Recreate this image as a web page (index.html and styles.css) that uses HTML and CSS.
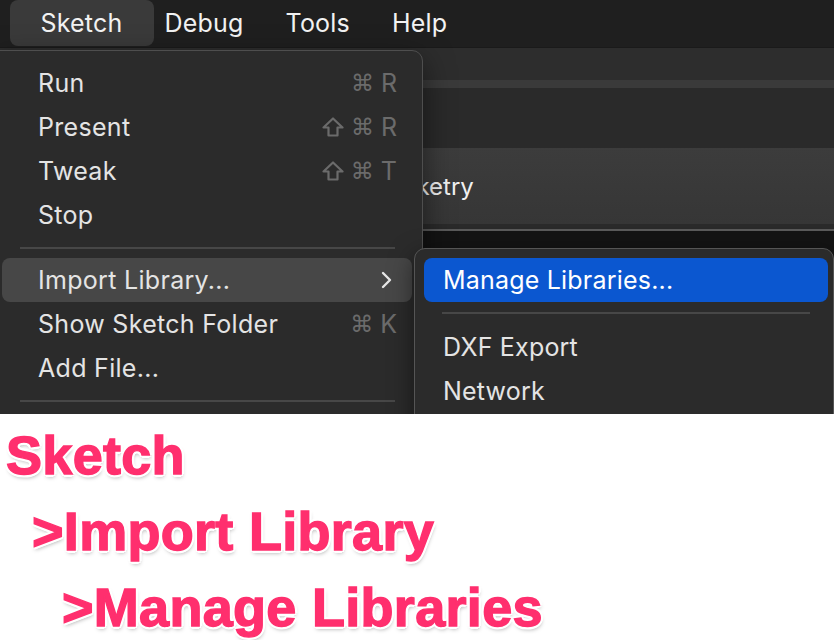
FILE: index.html
```html
<!DOCTYPE html>
<html lang="en">
<head>
<meta charset="utf-8">
<title>Sketch menu</title>
<link rel="stylesheet" href="styles.css">
</head>
<body>
<div class="screen">
  <div class="menubar">
    <span class="mb-item active">Sketch</span>
    <span class="mb-item">Debug</span>
    <span class="mb-item">Tools</span>
    <span class="mb-item">Help</span>
  </div>
  <div class="app">
    <div class="band b1"></div>
    <div class="band b2"></div>
    <div class="band b3"></div>
    <div class="band b4"><span class="tab-title">Sketry</span></div>
    <div class="band b5"></div>
    <div class="band b6"></div>
    <div class="band b7"></div>
  </div>

  <div class="menu">
    <div class="item"><span>Run</span><span class="sc"><span class="g">⌘</span><span>R</span></span></div>
    <div class="item"><span>Present</span><span class="sc"><svg class="shift" width="22" height="22" viewBox="0 0 22 22"><path d="M11 2.5 L20.5 11.5 H15.5 V19.5 H6.5 V11.5 H1.5 Z" fill="none" stroke="#6b6b6b" stroke-width="2.2" stroke-linejoin="round"/></svg><span class="g">⌘</span><span>R</span></span></div>
    <div class="item"><span>Tweak</span><span class="sc"><svg class="shift" width="22" height="22" viewBox="0 0 22 22"><path d="M11 2.5 L20.5 11.5 H15.5 V19.5 H6.5 V11.5 H1.5 Z" fill="none" stroke="#6b6b6b" stroke-width="2.2" stroke-linejoin="round"/></svg><span class="g">⌘</span><span>T</span></span></div>
    <div class="item"><span>Stop</span></div>
    <div class="sep"></div>
    <div class="item hl"><span>Import Library...</span>
      <svg class="chev" width="12" height="20" viewBox="0 0 12 20"><polyline points="2,3 9,10 2,17" fill="none" stroke="#e6e6e6" stroke-width="2.4" stroke-linecap="round" stroke-linejoin="round"/></svg>
    </div>
    <div class="item"><span>Show Sketch Folder</span><span class="sc"><span class="g">⌘</span><span>K</span></span></div>
    <div class="item"><span>Add File...</span></div>
    <div class="sep"></div>
  </div>

  <div class="submenu">
    <div class="sitem blue">Manage Libraries...</div>
    <div class="ssep"></div>
    <div class="sitem">DXF Export</div>
    <div class="sitem">Network</div>
  </div>
</div>

<div class="caption">
  <div class="cap l1">Sketch</div>
  <div class="cap l2">&gt;Import Library</div>
  <div class="cap l3">&gt;Manage Libraries</div>
</div>
</body>
</html>
```

FILE: styles.css
```css
html, body {
  margin: 0;
  padding: 0;
  background: #ffffff;
}
body {
  width: 834px;
  height: 640px;
  overflow: hidden;
  font-family: Inter, "Noto Sans", sans-serif;
}
.screen {
  position: relative;
  height: 414px;
  overflow: hidden;
  background: #2a2a2a;
}
.menubar {
  height: 47px;
  background: #1f1f1f;
  display: flex;
  align-items: center;
  padding-left: 20px;
}
.mb-item {
  position: relative;
  z-index: 0;
  padding: 0 20.5px;
  font-size: 25px;
  letter-spacing: 0.2px;
  color: #f2f2f2;
  line-height: 47px;
}
.mb-item:nth-child(n+2) { margin-left: 1px; }
.mb-item.active::before {
  content: "";
  position: absolute;
  z-index: -1;
  top: 0;
  bottom: 1px;
  left: -10px;
  right: -11px;
  background: #3a3a3a;
  border-radius: 8px;
}
.app {
  display: flex;
  flex-direction: column;
}
.band { flex: none; }
.b1 { height: 33px; background: #2d2d2d; border-top: 1px solid #1a1a1a; box-sizing: border-box; }
.b2 { height: 8px; background: #3a3a3a; }
.b3 { height: 60px; background: #2a2a2a; }
.b4 {
  height: 76px;
  background: linear-gradient(#3c3c3c, #363636);
  display: flex;
  align-items: center;
  padding-left: 401px;
}
.tab-title {
  font-size: 24px;
  color: #f0f0f0;
}
.b5 { height: 5px; background: #2a2a2a; }
.b6 { height: 2px; background: #5a5a5a; }
.b7 { height: 200px; background: #141414; }

.menu {
  position: absolute;
  left: -1px;
  top: 50px;
  width: 424px;
  height: 400px;
  background: #2b2b2b;
  border: 1px solid #4e4e4e;
  border-radius: 0 11px 0 0;
  padding-top: 10px;
  box-sizing: border-box;
  box-shadow: 0 10px 30px rgba(0, 0, 0, 0.5);
  z-index: 2;
}
.item {
  height: 44px;
  margin: 0 10px 0 2px;
  padding: 0 15px 0 36px;
  border-radius: 8px;
  display: flex;
  align-items: center;
  justify-content: space-between;
  font-size: 25px;
  letter-spacing: 0.3px;
  color: #e4e4e4;
}
.item.hl {
  background: #474747;
}
.sc {
  display: flex;
  align-items: center;
  gap: 7px;
  color: #6b6b6b;
  font-size: 25px;
  letter-spacing: 0;
}
.sc .g {
  font-family: "DejaVu Sans", sans-serif;
  font-size: 23px;
}
.shift { display: block; }
.chev { margin-right: 4px; }
.sep {
  height: 2px;
  margin: 10px 27px 9px 20px;
  background: #474747;
}

.submenu {
  position: absolute;
  left: 414px;
  top: 248px;
  width: 420px;
  height: 200px;
  background: #2b2b2b;
  border: 1px solid #555555;
  border-radius: 11px 11px 0 0;
  padding-top: 9px;
  box-sizing: border-box;
  box-shadow: 0 8px 24px rgba(0, 0, 0, 0.5);
  z-index: 3;
}
.sitem {
  height: 44px;
  margin: 0 5px 0 9px;
  padding-left: 19px;
  border-radius: 8px;
  display: flex;
  align-items: center;
  font-size: 25px;
  letter-spacing: 0.2px;
  color: #e4e4e4;
}
.sitem.blue {
  background: #0b57d0;
  color: #ffffff;
}
.ssep {
  height: 2px;
  margin: 10px 23px 11px 27px;
  background: #474747;
}

.caption {
  padding-top: 3px;
  background: #ffffff;
}
.cap {
  font-family: "Liberation Sans", Arial, sans-serif;
  font-weight: 700;
  font-size: 54px;
  line-height: 76px;
  letter-spacing: 0.3px;
  color: #ff2f6e;
  -webkit-text-stroke: 1.4px #ff2f6e;
  white-space: nowrap;
  text-shadow:
    2px 0 0 #fff, -2px 0 0 #fff, 0 2px 0 #fff, 0 -2px 0 #fff,
    2px 2px 0 #fff, -2px -2px 0 #fff, 2px -2px 0 #fff, -2px 2px 0 #fff,
    3px 0 0 #fff, -3px 0 0 #fff, 0 3px 0 #fff, 0 -3px 0 #fff,
    1px 3px 4px rgba(0, 0, 0, 0.35);
}
.l1 { padding-left: 6px; }
.l2 { padding-left: 32px; }
.l3 { padding-left: 62px; }
```
